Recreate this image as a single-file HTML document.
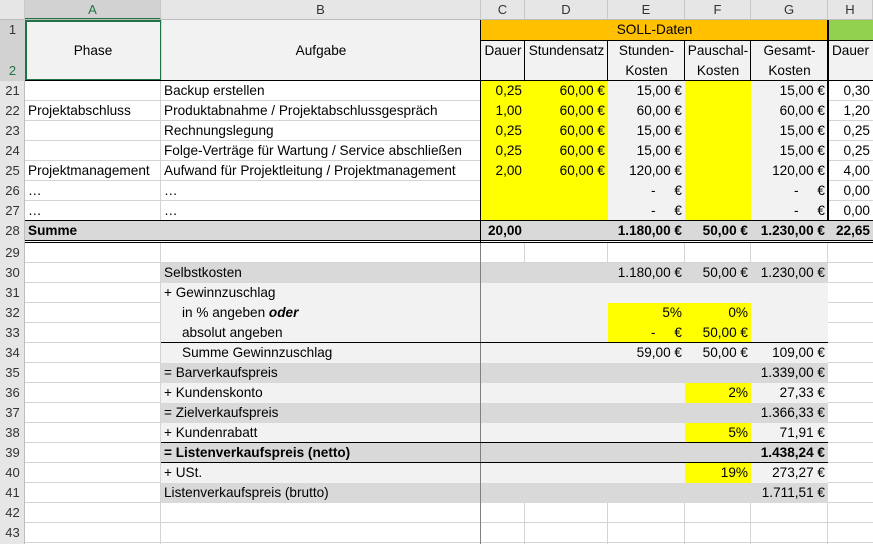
<!DOCTYPE html>
<html><head><meta charset="utf-8"><style>
body{margin:0;width:873px;height:544px;overflow:hidden;background:#fff;position:relative;font-family:"Liberation Sans",Arial,sans-serif;font-size:13.6px;color:#000}
div{position:absolute;box-sizing:border-box}
.v{width:1px;top:20px;height:524px;background:#d4d4d4}
.h{height:1px;left:25px;width:848px;background:#d4d4d4}
.t{height:20px;line-height:20px;white-space:nowrap;padding:0 3px;overflow:visible}
.r{text-align:right}
.ce{text-align:center}
.rh{left:0;width:25px;height:20px;line-height:20px;text-align:center;color:#333;font-size:13px}
.ch{top:0;height:20px;line-height:20px;text-align:center;background:#e6e6e6;color:#333;font-size:13px;border-right:1px solid #c8c8c8}
.y{background:#ffff00}.g{background:#f2f2f2}.d{background:#d9d9d9}
.k{background:#000}
</style></head><body>
<div class="v" style="left:160px"></div><div class="v" style="left:480px"></div><div class="v" style="left:524px"></div><div class="v" style="left:607px"></div><div class="v" style="left:684px"></div><div class="v" style="left:750px"></div><div class="v" style="left:827px"></div>
<div class="h" style="top:100px"></div><div class="h" style="top:120px"></div><div class="h" style="top:140px"></div><div class="h" style="top:160px"></div><div class="h" style="top:180px"></div><div class="h" style="top:200px"></div><div class="h" style="top:220px"></div>
<div class="h" style="top:262px"></div><div class="h" style="top:282px"></div><div class="h" style="top:302px"></div><div class="h" style="top:322px"></div><div class="h" style="top:342px"></div><div class="h" style="top:362px"></div><div class="h" style="top:382px"></div><div class="h" style="top:402px"></div><div class="h" style="top:422px"></div><div class="h" style="top:442px"></div><div class="h" style="top:462px"></div><div class="h" style="top:482px"></div><div class="h" style="top:502px"></div><div class="h" style="top:522px"></div><div class="h" style="top:542px"></div>

<div class="ch" style="left:0;width:25px"></div>
<div class="ch" style="left:25px;width:136px;background:#d2d2d2;color:#217346;border-bottom:2px solid #217346">A</div>
<div class="ch" style="left:161px;width:320px">B</div>
<div class="ch" style="left:481px;width:44px">C</div>
<div class="ch" style="left:525px;width:83px">D</div>
<div class="ch" style="left:608px;width:77px">E</div>
<div class="ch" style="left:685px;width:66px">F</div>
<div class="ch" style="left:751px;width:77px">G</div>
<div class="ch" style="left:828px;width:45px">H</div>
<div style="left:0;top:19px;width:873px;height:1px;background:#bdbdbd"></div>

<div class="g" style="left:25px;top:20px;width:456px;height:61px"></div>
<div style="left:25px;top:20px;width:137px;height:61px;border:2px solid #217346"></div>
<div class="t ce" style="left:25px;top:41px;width:136px">Phase</div>
<div class="t ce" style="left:161px;top:41px;width:320px">Aufgabe</div>
<div style="left:161px;top:20px;width:1px;height:61px;background:#d4d4d4"></div>
<div class="t ce" style="left:481px;top:20px;width:347px;height:21px;background:#ffc000">SOLL-Daten</div>
<div style="left:828px;top:20px;width:45px;height:21px;background:#92d050"></div>
<div class="g" style="left:481px;top:41px;width:392px;height:40px"></div>
<div class="k" style="left:481px;top:40px;width:392px;height:1px"></div>
<div class="t ce" style="left:481px;top:41px;width:44px;padding:0">Dauer</div>
<div class="t ce" style="left:525px;top:41px;width:83px;padding:0">Stundensatz</div>
<div class="t ce" style="left:608px;top:41px;width:77px">Stunden-</div>
<div class="t ce" style="left:608px;top:61px;width:77px">Kosten</div>
<div class="t ce" style="left:685px;top:41px;width:66px;padding:0">Pauschal-</div>
<div class="t ce" style="left:685px;top:61px;width:66px">Kosten</div>
<div class="t ce" style="left:751px;top:41px;width:77px">Gesamt-</div>
<div class="t ce" style="left:751px;top:61px;width:77px">Kosten</div>
<div class="t ce" style="left:828px;top:41px;width:45px;padding:0">Dauer</div>
<div class="k" style="left:524px;top:41px;width:1px;height:40px"></div>
<div class="k" style="left:607px;top:41px;width:1px;height:40px"></div>
<div class="k" style="left:684px;top:41px;width:1px;height:40px"></div>
<div class="k" style="left:750px;top:41px;width:1px;height:40px"></div>
<div class="k" style="left:25px;top:80px;width:848px;height:1px"></div>

<div class="y" style="left:481px;top:81px;width:127px;height:140px"></div>
<div class="g" style="left:608px;top:81px;width:77px;height:140px"></div>
<div class="y" style="left:685px;top:81px;width:66px;height:140px"></div>
<div class="g" style="left:751px;top:81px;width:77px;height:140px"></div>

<div class="t" style="left:161px;top:81px">Backup erstellen</div>
<div class="t" style="left:25px;top:101px">Projektabschluss</div>
<div class="t" style="left:161px;top:101px">Produktabnahme / Projektabschlussgespräch</div>
<div class="t" style="left:161px;top:121px">Rechnungslegung</div>
<div class="t" style="left:161px;top:141px">Folge-Verträge für Wartung / Service abschließen</div>
<div class="t" style="left:25px;top:161px">Projektmanagement</div>
<div class="t" style="left:161px;top:161px">Aufwand für Projektleitung / Projektmanagement</div>
<div class="t" style="left:25px;top:181px">…</div><div class="t" style="left:161px;top:181px">…</div>
<div class="t" style="left:25px;top:201px">…</div><div class="t" style="left:161px;top:201px">…</div>

<div class="t r" style="left:481px;top:81px;width:44px">0,25</div>
<div class="t r" style="left:481px;top:101px;width:44px">1,00</div>
<div class="t r" style="left:481px;top:121px;width:44px">0,25</div>
<div class="t r" style="left:481px;top:141px;width:44px">0,25</div>
<div class="t r" style="left:481px;top:161px;width:44px">2,00</div>
<div class="t r" style="left:525px;top:81px;width:83px">60,00 €</div>
<div class="t r" style="left:525px;top:101px;width:83px">60,00 €</div>
<div class="t r" style="left:525px;top:121px;width:83px">60,00 €</div>
<div class="t r" style="left:525px;top:141px;width:83px">60,00 €</div>
<div class="t r" style="left:525px;top:161px;width:83px">60,00 €</div>
<div class="t r" style="left:608px;top:81px;width:77px">15,00 €</div>
<div class="t r" style="left:608px;top:101px;width:77px">60,00 €</div>
<div class="t r" style="left:608px;top:121px;width:77px">15,00 €</div>
<div class="t r" style="left:608px;top:141px;width:77px">15,00 €</div>
<div class="t r" style="left:608px;top:161px;width:77px">120,00 €</div>
<div class="t r" style="left:608px;top:181px;width:77px">-&nbsp;&nbsp;&nbsp;&nbsp;&nbsp;€</div>
<div class="t r" style="left:608px;top:201px;width:77px">-&nbsp;&nbsp;&nbsp;&nbsp;&nbsp;€</div>
<div class="t r" style="left:751px;top:81px;width:77px">15,00 €</div>
<div class="t r" style="left:751px;top:101px;width:77px">60,00 €</div>
<div class="t r" style="left:751px;top:121px;width:77px">15,00 €</div>
<div class="t r" style="left:751px;top:141px;width:77px">15,00 €</div>
<div class="t r" style="left:751px;top:161px;width:77px">120,00 €</div>
<div class="t r" style="left:751px;top:181px;width:77px">-&nbsp;&nbsp;&nbsp;&nbsp;&nbsp;€</div>
<div class="t r" style="left:751px;top:201px;width:77px">-&nbsp;&nbsp;&nbsp;&nbsp;&nbsp;€</div>
<div class="t r" style="left:828px;top:81px;width:45px">0,30</div>
<div class="t r" style="left:828px;top:101px;width:45px">1,20</div>
<div class="t r" style="left:828px;top:121px;width:45px">0,25</div>
<div class="t r" style="left:828px;top:141px;width:45px">0,25</div>
<div class="t r" style="left:828px;top:161px;width:45px">4,00</div>
<div class="t r" style="left:828px;top:181px;width:45px">0,00</div>
<div class="t r" style="left:828px;top:201px;width:45px">0,00</div>

<div class="k" style="left:25px;top:220px;width:848px;height:1px"></div>
<div class="d" style="left:25px;top:221px;width:848px;height:20px"></div>
<div class="t" style="left:25px;top:221px;font-weight:bold">Summe</div>
<div class="t r" style="left:481px;top:221px;width:44px;font-weight:bold">20,00</div>
<div class="t r" style="left:608px;top:221px;width:77px;font-weight:bold">1.180,00 €</div>
<div class="t r" style="left:685px;top:221px;width:66px;font-weight:bold">50,00 €</div>
<div class="t r" style="left:751px;top:221px;width:77px;font-weight:bold">1.230,00 €</div>
<div class="t r" style="left:828px;top:221px;width:45px;font-weight:bold">22,65</div>
<div class="k" style="left:25px;top:240px;width:848px;height:1px"></div>
<div style="left:25px;top:241px;width:848px;height:1px;background:#fff"></div>
<div class="k" style="left:25px;top:242px;width:848px;height:1px"></div>

<div class="k" style="left:480px;top:20px;width:1px;height:222px"></div>
<div class="k" style="left:827px;top:20px;width:2px;height:201px"></div>
<div style="left:480px;top:243px;width:1px;height:301px;background:#808080"></div>

<div class="d" style="left:161px;top:263px;width:667px;height:20px"></div>
<div class="g" style="left:161px;top:283px;width:667px;height:80px"></div>
<div class="d" style="left:161px;top:363px;width:667px;height:20px"></div>
<div class="g" style="left:161px;top:383px;width:667px;height:20px"></div>
<div class="d" style="left:161px;top:403px;width:667px;height:20px"></div>
<div class="g" style="left:161px;top:423px;width:667px;height:20px"></div>
<div class="d" style="left:161px;top:443px;width:667px;height:20px"></div>
<div class="g" style="left:161px;top:463px;width:667px;height:20px"></div>
<div class="d" style="left:161px;top:483px;width:667px;height:20px"></div>
<div style="left:480px;top:263px;width:1px;height:240px;background:#808080"></div>
<div class="y" style="left:608px;top:303px;width:143px;height:40px"></div>
<div class="y" style="left:685px;top:383px;width:66px;height:20px"></div>
<div class="y" style="left:685px;top:423px;width:66px;height:20px"></div>
<div class="y" style="left:685px;top:463px;width:66px;height:20px"></div>
<div class="k" style="left:161px;top:342px;width:667px;height:1px"></div>
<div class="k" style="left:161px;top:442px;width:667px;height:1px"></div>
<div class="k" style="left:161px;top:462px;width:667px;height:1px"></div>

<div class="t" style="left:161px;top:263px">Selbstkosten</div>
<div class="t" style="left:161px;top:283px">+ Gewinnzuschlag</div>
<div class="t" style="left:179px;top:303px">in % angeben <b><i>oder</i></b></div>
<div class="t" style="left:179px;top:323px">absolut angeben</div>
<div class="t" style="left:179px;top:343px">Summe Gewinnzuschlag</div>
<div class="t" style="left:161px;top:363px">= Barverkaufspreis</div>
<div class="t" style="left:161px;top:383px">+ Kundenskonto</div>
<div class="t" style="left:161px;top:403px">= Zielverkaufspreis</div>
<div class="t" style="left:161px;top:423px">+ Kundenrabatt</div>
<div class="t" style="left:161px;top:443px;font-weight:bold">= Listenverkaufspreis (netto)</div>
<div class="t" style="left:161px;top:463px">+ USt.</div>
<div class="t" style="left:161px;top:483px">Listenverkaufspreis (brutto)</div>

<div class="t r" style="left:608px;top:263px;width:77px">1.180,00 €</div>
<div class="t r" style="left:685px;top:263px;width:66px">50,00 €</div>
<div class="t r" style="left:751px;top:263px;width:77px">1.230,00 €</div>
<div class="t r" style="left:608px;top:303px;width:77px">5%</div>
<div class="t r" style="left:685px;top:303px;width:66px">0%</div>
<div class="t r" style="left:608px;top:323px;width:77px">-&nbsp;&nbsp;&nbsp;&nbsp;&nbsp;€</div>
<div class="t r" style="left:685px;top:323px;width:66px">50,00 €</div>
<div class="t r" style="left:608px;top:343px;width:77px">59,00 €</div>
<div class="t r" style="left:685px;top:343px;width:66px">50,00 €</div>
<div class="t r" style="left:751px;top:343px;width:77px">109,00 €</div>
<div class="t r" style="left:751px;top:363px;width:77px">1.339,00 €</div>
<div class="t r" style="left:685px;top:383px;width:66px">2%</div>
<div class="t r" style="left:751px;top:383px;width:77px">27,33 €</div>
<div class="t r" style="left:751px;top:403px;width:77px">1.366,33 €</div>
<div class="t r" style="left:685px;top:423px;width:66px">5%</div>
<div class="t r" style="left:751px;top:423px;width:77px">71,91 €</div>
<div class="t r" style="left:751px;top:443px;width:77px;font-weight:bold">1.438,24 €</div>
<div class="t r" style="left:685px;top:463px;width:66px">19%</div>
<div class="t r" style="left:751px;top:463px;width:77px">273,27 €</div>
<div class="t r" style="left:751px;top:483px;width:77px">1.711,51 €</div>

<div style="left:0;top:20px;width:25px;height:524px;background:#e6e6e6;border-right:1px solid #bdbdbd"></div>
<div style="left:0;top:20px;width:25px;height:61px;background:#d2d2d2"></div>
<div class="rh" style="top:20px">1</div>
<div class="rh" style="top:61px;color:#217346">2</div>
<div class="rh" style="top:81px">21</div><div class="rh" style="top:101px">22</div><div class="rh" style="top:121px">23</div><div class="rh" style="top:141px">24</div><div class="rh" style="top:161px">25</div><div class="rh" style="top:181px">26</div><div class="rh" style="top:201px">27</div><div class="rh" style="top:221px">28</div>
<div class="rh" style="top:243px">29</div><div class="rh" style="top:263px">30</div><div class="rh" style="top:283px">31</div><div class="rh" style="top:303px">32</div><div class="rh" style="top:323px">33</div><div class="rh" style="top:343px">34</div><div class="rh" style="top:363px">35</div><div class="rh" style="top:383px">36</div><div class="rh" style="top:403px">37</div><div class="rh" style="top:423px">38</div><div class="rh" style="top:443px">39</div><div class="rh" style="top:463px">40</div><div class="rh" style="top:483px">41</div><div class="rh" style="top:503px">42</div><div class="rh" style="top:523px">43</div>
</body></html>
